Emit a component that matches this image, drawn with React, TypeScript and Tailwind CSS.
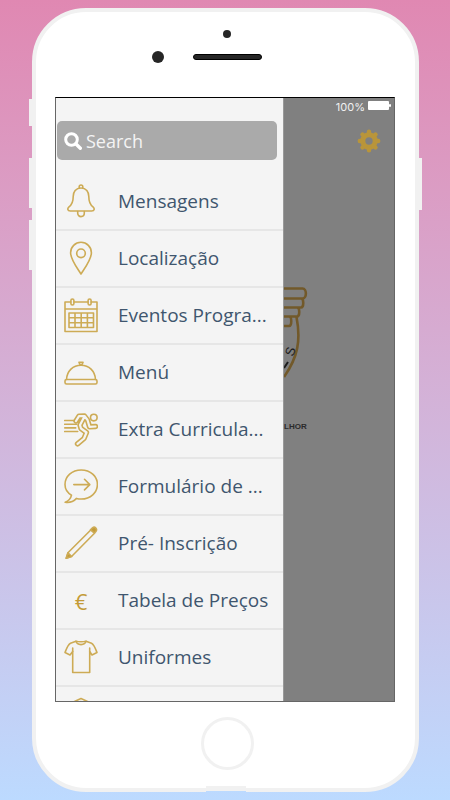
import type { ReactNode } from "react";

const limbs =
  "M12 9 15 4.200 20.500 4 23.500 8 25.500 14.800 31.500 14.500M20.500 4.500 16 13 17 16.500 22.500 20.500 20 26.500 13.500 31.800";

const icons: Record<string, ReactNode> = {
  bell: (
    <>
      <path d="M15.2 4.2V2.8a1.8 1.8 0 0 1 3.600 0v1.400" />
      <path d="M17 4C11.800 4 9.200 8 9.200 12.500c0 6-1.200 8.200-4.200 10.300C3 24.600 3.400 27 6.400 27h21.200c3 0 3.400-2.400 1.400-4.200-3-2.100-4.200-4.300-4.200-10.300C24.800 8 22.200 4 17 4Z" />
      <path d="M13.700 27.500v1.800a3.300 3.300 0 0 0 6.600 0v-1.800" />
    </>
  ),
  pin: (
    <>
      <path d="M17 33C12.500 26 6.600 18.500 6.600 11.700a10.400 10.400 0 0 1 20.800 0C27.400 18.500 21.500 26 17 33Z" />
      <circle cx="17" cy="12.300" r="4.300" />
    </>
  ),
  calendar: (
    <>
      <path d="M6.800 4H1v29.500h32V4h-5.800M10 4h14M1 11h32" />
      <rect x="6.900" y="1" width="3" height="6" rx="1.500" />
      <rect x="24.100" y="1" width="3" height="6" rx="1.500" />
      <path d="M5 15h24.500v14.500H5ZM5 19.800h24.500M5 24.700h24.500M11 15v14.500M17.200 15v14.500M23.400 15v14.500" />
    </>
  ),
  menu: (
    <>
      <path d="M2.500 24.500C3 16 9 10.200 17 10.200S31 16 31.500 24.500" />
      <rect x="1" y="24.500" width="32" height="4.500" rx="1.500" />
      <path d="M15 7.300h4l-1.200 2.500h-1.600Z" />
    </>
  ),
  runner: (
    <>
      <path d="M.7 8.500h11M.7 12.200h12M.7 15.900h11M.7 19.500h13" />
      <path d={limbs} strokeWidth="5.400" />
      <path d={limbs} strokeWidth="2.200" stroke="#f4f4f4" />
      <circle cx="29.800" cy="5.600" r="3.300" />
    </>
  ),
  chat: (
    <>
      <path d="M7.500 26.200C3.500 23.800 1 20 1 15.500 1 7.400 8 1 17.200 1s16.200 6.400 16.200 14.500-7 14.500-16.200 14.500c-1.800 0-3.200-.2-4.700-.6C9.500 32.500 5.500 34 1.200 33.300c3.300-1.300 5.600-3.800 6.300-7.100Z" />
      <path d="M9.800 15.600h16M20.500 10.300l5.300 5.300-5.300 5.300" />
    </>
  ),
  pencil: (
    <>
      <path d="M2.200 32.200 4.200 26.500 27 3.800l3.500 3.500L7.800 30.200Z" />
      <path d="m2.200 32.200 1.700-5.400 3.800 3.700Z" fill="#c39b38" />
      <path d="m26.500 3.800 2-2c1.200-1 2.400-.7 3.300.3s1.100 2.200.1 3.300L30.500 7Z" fill="#c39b38" />
    </>
  ),
  shirt: (
    <>
      <path d="M12 1.200 6.500 3.200C4 4.300 2.500 8.500 1 12.500l5 2.500 2.700-3.500V32.500h17V11.500L28 15l5-2.500c-1.500-4-3-8.200-5.500-9.300L22 1.200c-2 .5-8 .5-10 0Z" />
      <path d="M12 1.200c1 4.500 9 4.500 10 0M8.700 11.500V8M25.700 11.500V8" />
    </>
  ),
  cap: <path d="M17 1.500 5 7l12 6 12-6Z M17 4.500 11 7.500" />,
};

const items = [
  { icon: "bell", label: "Mensagens" },
  { icon: "pin", label: "Localização" },
  { icon: "calendar", label: "Eventos Progra..." },
  { icon: "menu", label: "Menú" },
  { icon: "runner", label: "Extra Curricula..." },
  { icon: "chat", label: "Formulário de ..." },
  { icon: "pencil", label: "Pré- Inscrição" },
  { icon: "euro", label: "Tabela de Preços" },
  { icon: "shirt", label: "Uniformes" },
  { icon: "cap", label: "" },
];

function ItemIcon({ name }: { name: string }) {
  if (name === "euro") {
    return (
      <span className="w-[34px] shrink-0 text-center text-[22px] font-medium leading-8 text-[#c39b38]">€</span>
    );
  }
  return (
    <svg
      viewBox="0 0 34 35"
      className="h-[35px] w-[34px] shrink-0"
      fill="none"
      stroke="#cdab55"
      strokeWidth="1.6"
      strokeLinejoin="round"
      strokeLinecap="round"
      aria-hidden="true"
    >
      {icons[name]}
    </svg>
  );
}

function Drawer() {
  return (
    <nav className="flex w-[227px] shrink-0 flex-col bg-[#f4f4f4]">
      <label className="mr-1.5 ml-px mt-[23px] flex h-[39px] shrink-0 items-center gap-1 rounded-[5px] bg-[#aaaaaa] pl-[7px]">
        <svg viewBox="0 0 18 18" className="size-[18px] shrink-0" fill="none" stroke="#fff" aria-hidden="true">
          <circle cx="7.500" cy="7.500" r="5.800" strokeWidth="3" />
          <path d="m12 12 4.300 4.300" strokeWidth="3.400" strokeLinecap="round" />
        </svg>
        <input
          type="search"
          aria-label="Search"
          placeholder="Search"
          className="w-full min-w-0 bg-transparent text-lg text-white outline-none placeholder:text-[#f4f4f4]"
        />
      </label>
      <ul className="mt-[14px]">
        {items.map((item) => (
          <li key={item.icon}>
            <a
              href="#"
              aria-label={item.label || undefined}
              className="flex h-[57px] items-center gap-5 border-b-2 border-[#e6e6e6] pl-2 text-[19px] whitespace-nowrap text-[#3f566e]"
            >
              <ItemIcon name={item.icon} />
              {item.label}
            </a>
          </li>
        ))}
      </ul>
    </nav>
  );
}

function Gear() {
  return (
    <svg viewBox="0 0 24 24" className="size-6" stroke="#b9953a" fill="none" aria-hidden="true">
      <circle cx="12" cy="12" r="6.200" strokeWidth="5" />
      <path
        d="M12 2.800v3M12 18.200v3M2.800 12h3M18.200 12h3M5.500 5.500l2 2M16.500 16.500l2 2M18.500 5.500l-2 2M7.500 16.500l-2 2"
        strokeWidth="4.400"
        strokeLinecap="round"
      />
    </svg>
  );
}

function AppPane() {
  return (
    <section className="flex min-w-0 flex-1 flex-col border-l border-[#999999] bg-[#808080]">
      <div className="flex h-[18px] items-center justify-end gap-[3px] pr-[3px] font-['Inter',sans-serif] text-[11px] text-[#f0f0f0]">
        100%
        <svg viewBox="0 0 23 9" className="mb-[3px] h-[9px] w-[23px]" fill="#fff" aria-hidden="true">
          <rect width="21" height="9" rx="1" />
          <rect x="21" y="3" width="2" height="3" rx="1" />
        </svg>
      </div>
      <button type="button" aria-label="Settings" className="mt-[13px] mr-[13px] self-end">
        <Gear />
      </button>
      <svg
        viewBox="0 0 40 110"
        className="mt-[131px] h-[110px] w-10"
        fill="none"
        stroke="#72592a"
        strokeWidth="2.600"
        aria-hidden="true"
      >
        <path d="M0 4.500h18.500c4.500 0 4.500 10 0 10H0M17 14.500c3 0 3 9 0 9H0M13 23.500c3 0 3 9 0 9H0M5 32.500c3 0 3 9.500 0 9.500H0" />
        <path d="M12.500 33C17 56 14 73 0 93" />
        <text
          x="0"
          y="0"
          transform="translate(9 73) rotate(-70)"
          fill="#1c1c1c"
          stroke="none"
          className="font-['Liberation_Sans',sans-serif] text-[13px]"
        >
          S
        </text>
        <path d="M0 84 4 78" stroke="#1c1c1c" strokeWidth="2" />
      </svg>
      <p className="mt-[27px] font-['Liberation_Sans',sans-serif] text-[8px] leading-[12px] font-bold text-[#2b2b2b]">
        LHOR
      </p>
    </section>
  );
}

export default function App() {
  return (
    <main className="flex h-screen bg-linear-to-b from-[#e088b2] to-[#bcdaff] py-2 pr-[31px] pl-8 font-['Open_Sans',sans-serif]">
      <div className="relative flex min-w-0 flex-1 flex-col rounded-[54px] border-4 border-[#f1f1f1] bg-white">
        <span className="absolute top-[87px] -left-[7px] h-[27px] w-1 bg-[#f1f1f1]" />
        <span className="absolute top-[146px] -left-[7px] h-[50px] w-1 bg-[#f1f1f1]" />
        <span className="absolute top-[208px] -left-[7px] h-[50px] w-1 bg-[#f1f1f1]" />
        <span className="absolute top-[146px] -right-[7px] h-[52px] w-1 bg-[#f1f1f1]" />
        <span className="absolute -bottom-[3px] left-1/2 h-[5px] w-10 -translate-x-1/2 bg-[#f1f1f1]" />
        <span className="absolute -bottom-1 left-1/2 h-px w-10 -translate-x-1/2 bg-[#bcdaff]" />

        <header className="flex h-[85px] shrink-0 flex-col items-center pt-[18px] pl-[3px]">
          <span className="size-2 rounded-full bg-[#262626]" />
          <div className="mt-[13px] flex items-center gap-[29px] pr-[41px]">
            <span className="size-3 rounded-full bg-[#262626]" />
            <span className="h-[6px] w-[69px] rounded-full border border-black bg-[#262626]" />
          </div>
        </header>

        <div className="mr-5 ml-[19px] flex min-h-0 flex-1 overflow-hidden border border-[#666666] border-t-black">
          <Drawer />
          <AppPane />
        </div>

        <footer className="flex h-[86px] shrink-0 justify-center pt-[15px] pl-[3px]">
          <button type="button" aria-label="Home" className="size-[53px] rounded-full border-3 border-[#f1f1f1]" />
        </footer>
      </div>
    </main>
  );
}
